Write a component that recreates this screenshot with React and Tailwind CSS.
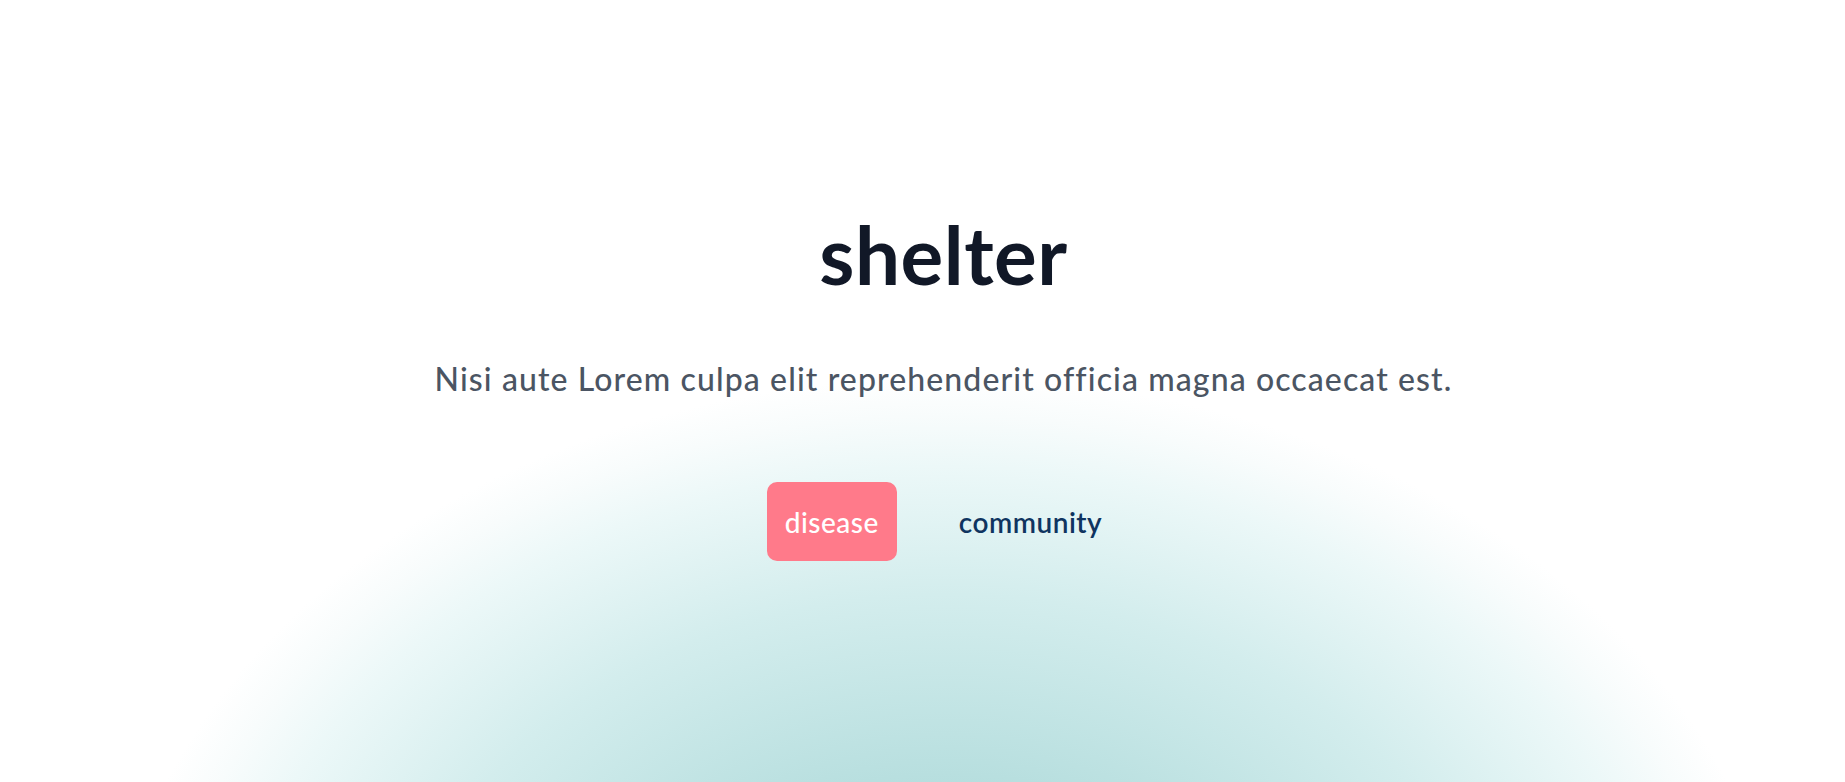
import React from "react";

export default function App() {
  return (
    <div
      className="relative h-[782px] w-full overflow-hidden bg-white bg-[radial-gradient(ellipse_840px_640px_at_947px_1017px,#a8d6d6_0%,#b6dede_36%,#d3eded_66%,#ecf8f8_86%,#f8fcfc_94%,#ffffff_100%)]"
      style={{ fontFamily: "Lato, 'Open Sans', sans-serif" }}
    >
      <div className="flex flex-col items-center pl-[42px] pt-[214px]">
        <h1 className="text-[80px] font-bold leading-none tracking-[0.5px] text-[#111827]">
          shelter
        </h1>
        <p className="mt-[65px] text-[32px] font-medium leading-[40px] tracking-[1.1px] text-[#4b5563]">
          Nisi aute Lorem culpa elit reprehenderit officia magna occaecat est.
        </p>
        <div className="mt-[83px] flex items-center gap-[44px]">
          <button className="h-[79px] rounded-[10px] bg-[#ff7a8a] px-[18px] text-[28px] font-medium tracking-[0.5px] text-white">
            disease
          </button>
          <button className="h-[79px] rounded-[10px] px-[18px] text-[28px] font-semibold tracking-[0.5px] text-[#0f3460]">
            community
          </button>
        </div>
      </div>
    </div>
  );
}
